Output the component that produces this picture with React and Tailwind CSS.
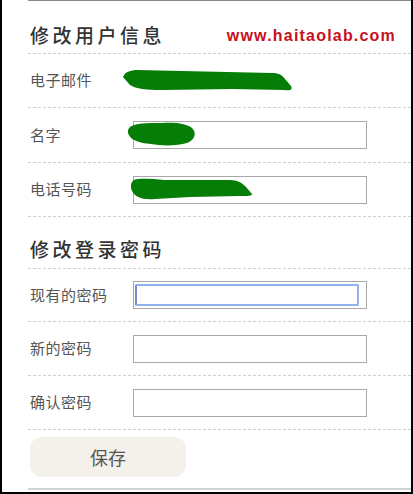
import React from "react";

const cjk = "font-['Noto_Sans_CJK_SC','Noto_Sans',sans-serif]";

const Scribble = ({ d, w, h, className }) => (
  <svg width={w} height={h} viewBox={`0 0 ${w} ${h}`} className={className}>
    <path d={d} fill="#067d06" />
  </svg>
);

const Field = ({ label, height, children }) => (
  <div
    className={`flex items-center border-b border-dashed border-[#cfcfcf] pl-[2px] ${height}`}
  >
    <span className="w-[103px] shrink-0 text-[15px] text-[#555] tracking-[0.5px]">
      {label}
    </span>
    {children}
  </div>
);

const Input = ({ focused, children }) => (
  <div className="relative w-[234px] h-[28px] border border-[#a8a8a8] bg-white">
    {focused && (
      <div className="absolute left-[1px] top-[2px] w-[224px] h-[22px] rounded-[2px] border-2 border-[#8fb3ea] border-l-[#6b8fd0]"></div>
    )}
    {children}
  </div>
);

const App = () => {
  return (
    <div className={`w-[413px] h-[494px] bg-white border-l-2 border-r-2 border-b-2 border-black ${cjk}`}>
      <div className="ml-[26px] border-t border-[#8a8a8a]">
        {/* 用户信息 */}
        <div className="flex items-end justify-between h-[53px] border-b border-dashed border-[#cfcfcf] pl-[2px] pr-[15px] pb-[4px]">
          <h2 className="text-[19px] font-medium tracking-[3.5px] text-[#333]">
            修改用户信息
          </h2>
          <span className="mb-[1px] font-['Liberation_Sans',Arial,sans-serif] text-[16px] font-bold tracking-[1.2px] text-[#c81020]">
            www.haitaolab.com
          </span>
        </div>

        <Field label="电子邮件" height="h-[54px]">
          <Scribble
            w={172}
            h={24}
            className="-ml-[11px] mt-[-1px]"
            d="M1 9 C3 4 8 2 16 2 L60 3 L150 5 C157 5 160 7 163 11 L169 18 C171 22 168 23 162 22 L110 21 L40 22 C24 22 14 21 8 17 Z"
          />
        </Field>

        <Field label="名字" height="h-[55px]">
          <Input>
            <Scribble
              w={70}
              h={25}
              className="absolute -left-[7px] top-0"
              d="M3 5 C8 1 20 1 35 1 C50 0 60 2 65 6 C70 11 68 18 60 21 C50 24 35 24 24 22 C12 21 4 18 2 13 C0 10 1 7 3 5 Z"
            />
          </Input>
        </Field>

        <Field label="电话号码" height="h-[54px]">
          <Input>
            <Scribble
              w={124}
              h={24}
              className="absolute -left-[4px] top-0"
              d="M4 3 C10 1 20 2 35 3 L100 3 C108 3 112 6 116 10 L122 17 C122 19 118 19 110 19 L60 20 L25 22 C12 23 5 20 2 14 C0 9 1 5 4 3 Z"
            />
          </Input>
        </Field>

        {/* 登录密码 */}
        <div className="flex items-end h-[52px] border-b border-dashed border-[#cfcfcf] pl-[2px] pb-[5px]">
          <h2 className="text-[19px] font-medium tracking-[3.5px] text-[#333]">
            修改登录密码
          </h2>
        </div>

        <Field label="现有的密码" height="h-[53px]">
          <Input focused />
        </Field>

        <Field label="新的密码" height="h-[54px]">
          <Input />
        </Field>

        <Field label="确认密码" height="h-[54px]">
          <Input />
        </Field>

        <div className="h-[58px] pl-[2px] pt-[7px]">
          <button className="w-[156px] h-[40px] rounded-[12px] bg-[#f4f1ea] text-[18px] text-[#555]">
            保存
          </button>
        </div>
        <div className="h-[2px] bg-[#d2d2d2]"></div>
      </div>
    </div>
  );
};

export default App;
